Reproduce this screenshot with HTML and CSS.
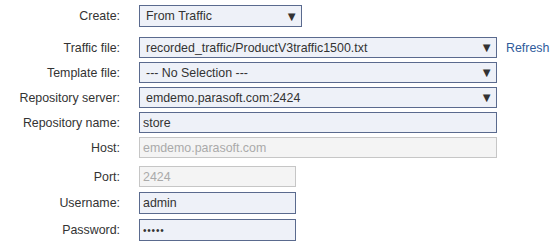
FILE: index.html
```html
<!DOCTYPE html>
<html lang="en">
<head>
  <meta charset="UTF-8" />
  <title>Create Repository</title>
  <link rel="stylesheet" href="styles.css">
</head>
<body>
  <form class="form">
    <div class="row row-create">
      <label class="label">Create:</label>
      <div class="select short"><span>From Traffic</span><span class="arrow">&#9660;</span></div>
    </div>

    <div class="row">
      <label class="label">Traffic file:</label>
      <div class="select wide"><span>recorded_traffic/ProductV3traffic1500.txt</span><span class="arrow">&#9660;</span></div>
      <a class="link" href="#">Refresh</a>
    </div>

    <div class="row">
      <label class="label">Template file:</label>
      <div class="select wide"><span>--- No Selection ---</span><span class="arrow">&#9660;</span></div>
    </div>

    <div class="row">
      <label class="label">Repository server:</label>
      <div class="select wide"><span>emdemo.parasoft.com:2424</span><span class="arrow">&#9660;</span></div>
    </div>

    <div class="row">
      <label class="label">Repository name:</label>
      <input class="field wide" type="text" value="store">
    </div>

    <div class="row">
      <label class="label">Host:</label>
      <input class="field wide" type="text" value="emdemo.parasoft.com" disabled>
    </div>

    <div class="row row-port">
      <label class="label">Port:</label>
      <input class="field narrow" type="text" value="2424" disabled>
    </div>

    <div class="row row-user">
      <label class="label">Username:</label>
      <input class="field narrow" type="text" value="admin">
    </div>

    <div class="row row-user">
      <label class="label">Password:</label>
      <input class="field narrow secret" type="password" value="admin">
    </div>
  </form>
</body>
</html>
```

FILE: styles.css
```css
body {
  margin: 0;
  background-color: white;
  font-family: "Liberation Sans", Arial, sans-serif;
  font-size: 12.4px;
  color: #333;
}

.form {
  display: flex;
  flex-direction: column;
  padding-top: 5px;
}

.row {
  display: flex;
  align-items: center;
  height: 21px;
  margin-top: 4px;
}

.row-create {
  height: 22px;
  margin-top: 0;
  margin-bottom: 6px;
}

.row-port {
  margin-top: 8px;
}

.row-user {
  height: 22px;
  margin-top: 5px;
}

.label {
  width: 120px;
  padding-right: 19px;
  text-align: right;
  color: #333;
}

.select, .field {
  box-sizing: border-box;
  height: 100%;
  border: 1px solid #5a6a8e;
  background-color: #eef1f8;
  color: #333;
  font-family: inherit;
  font-size: 12.4px;
}

.select {
  display: flex;
  align-items: center;
  justify-content: space-between;
  padding: 0 3px 0 6px;
}

.arrow {
  font-size: 13px;
  color: #333;
}

.field {
  margin: 0;
  padding: 0 3px;
  outline: none;
}

.field:disabled {
  border-color: #c6c6c6;
  background-color: #f4f4f4;
  color: #aaa;
}

.secret {
  font-size: 10px;
  letter-spacing: 0.8px;
}

.short { width: 163px; }
.wide { width: 358px; }
.narrow { width: 157px; }

.link {
  margin-left: 9px;
  color: #2f5b9b;
  text-decoration: none;
}
```
